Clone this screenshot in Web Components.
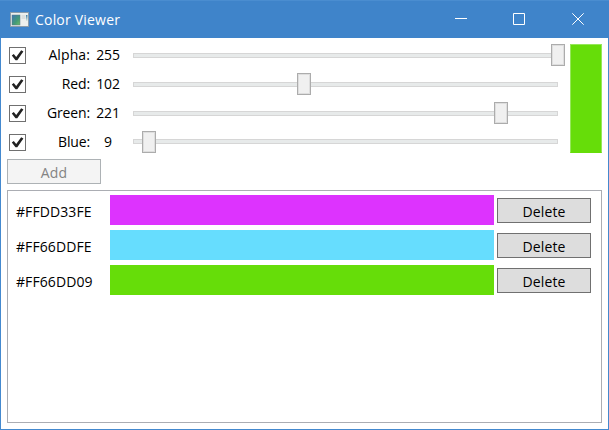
<!DOCTYPE html>
<html lang="en">
<head>
<meta charset="utf-8">
<title>Color Viewer</title>
<style>
html, body { margin: 0; height: 100%; }
body { font-family: "Open Sans", "Noto Sans", sans-serif; font-size: 14px; line-height: 20px; color: #000; overflow: hidden; }
</style>
</head>
<body>
<viewer-window>
  <title-bar slot="title">Color Viewer</title-bar>
  <channel-row label="Alpha:" value="255" pos="418" spacing="0.1px"></channel-row>
  <channel-row label="Red:" value="102" pos="164"></channel-row>
  <channel-row label="Green:" value="221" pos="361"></channel-row>
  <channel-row label="Blue:" value="9" pos="9" lift="1px"></channel-row>
  <push-button slot="add" disabled>Add</push-button>
  <color-item slot="list" color="#dd33fe">#FFDD33FE</color-item>
  <color-item slot="list" color="#66ddfe">#FF66DDFE</color-item>
  <color-item slot="list" color="#66dd09">#FF66DD09</color-item>
</viewer-window>
<script>
class Base extends HTMLElement {
  constructor() {
    super();
    this.attachShadow({ mode: 'open' }).innerHTML = this.markup();
  }
}

customElements.define('title-bar', class extends Base {
  markup() {
    return `<style>
      :host { display: flex; align-items: center; height: 38px; box-sizing: border-box; padding-left: 10px; background: #3f84ca; border-top: 1px solid #4a8dd0; color: #fff; }
      .icon { width: 19px; height: 15px; margin-right: 6px; }
      .text { flex: 1; letter-spacing: 0.2px; padding-top: 1px; }
      .controls { display: grid; grid-template-columns: 58px 59px 13px; margin-right: 24px; }
      .controls svg { width: 13px; height: 13px; fill: none; stroke: #fff; }
    </style>
    <svg class="icon" viewBox="0 0 19 15">
      <defs><linearGradient id="g" x2="1" y2="1"><stop offset="0" stop-color="#3f75b5"/><stop offset=".6" stop-color="#439b76"/><stop offset="1" stop-color="#70bd65"/></linearGradient>
      <linearGradient id="h" x2="0" y2="1"><stop offset="0" stop-color="#397ea7"/><stop offset="1" stop-color="#dfe8df"/></linearGradient></defs>
      <rect x=".5" y=".5" width="18" height="14" fill="#eef0ee" stroke="#8b9caa"/>
      <rect x="2" y="3" width="8" height="10" fill="url(#g)" stroke="#58798d" stroke-width=".5"/>
      <rect x="11.5" y="3" width="4" height="4" fill="#dce0df"/>
      <rect x="16" y="3" width="1.5" height="6" fill="url(#h)"/>
    </svg>
    <span class="text"><slot></slot></span>
    <span class="controls">
      <svg viewBox="0 0 13 13"><path d="M0 5.5H12"/></svg>
      <svg viewBox="0 0 13 13"><path d="M.5 .5H11.5V11.5H.5V.5Z"/></svg>
      <svg viewBox="0 0 13 13"><path d="M.3 .3L11.7 11.7M11.7 .3L.3 11.7"/></svg>
    </span>`;
  }
});

customElements.define('check-box', class extends Base {
  markup() {
    return `<style>
      :host { display: block; width: 17px; height: 17px; box-sizing: border-box; border: 1px solid #707070; background: #fff; }
      svg { display: block; width: 15px; height: 15px; }
    </style>
    <svg viewBox="0 0 15 15"><path d="M1.8 7.6L3.8 6.1L6.2 9L11.2 2.3L13.4 3.5L7.3 12.2H5.5Z" fill="#212121"/></svg>`;
  }
});

customElements.define('value-slider', class extends Base {
  markup() {
    return `<style>
      :host { display: flex; align-items: flex-start; height: 22px; width: 431px; }
      .track { width: 425px; height: 5px; box-sizing: border-box; border: 1px solid #d6d6d6; background: #e7eaea; margin-top: calc(9px - var(--lift)); display: flex; align-items: flex-start; }
      .thumb { flex: none; width: 14px; height: 22px; box-sizing: border-box; border: 1px solid #acacac; box-shadow: inset 0 0 0 1px #dedede; background: #f0f0f0; margin: calc(var(--lift) - 10px) 0 0 calc(var(--pos) - 1px); }
    </style><div class="track"><div class="thumb"></div></div>`;
  }
});

customElements.define('channel-row', class extends Base {
  markup() {
    const lift = this.getAttribute('lift') || '0px';
    return `<style>
      :host { display: grid; grid-template-columns: 17px 64px 36px 431px; align-items: start; height: 29px; padding-left: 2px; }
      check-box { margin-top: 6px; }
      span { margin-top: 4px; }
      .label { text-align: right; letter-spacing: ${this.getAttribute('spacing') || '-0.15px'}; }
      .value { text-align: center; letter-spacing: -0.15px; }
      value-slider { margin: 3px 0 0 7px; --lift: ${lift}; }
    </style>
    <check-box></check-box>
    <span class="label">${this.getAttribute('label')}</span>
    <span class="value">${this.getAttribute('value')}</span>
    <value-slider style="--pos:${this.getAttribute('pos')}px"></value-slider>`;
  }
});

customElements.define('push-button', class extends Base {
  markup() {
    return `<style>
      :host { display: flex; align-items: center; justify-content: center; width: 94px; height: 25px; box-sizing: border-box; padding-top: 3px; border: 1px solid #707070; background: #ddd; }
      :host([disabled]) { background: #f4f4f4; border-color: #adb2b5; color: #838383; letter-spacing: 0.2px; }
    </style><slot></slot>`;
  }
});

customElements.define('color-item', class extends Base {
  markup() {
    return `<style>
      :host { display: grid; grid-template-columns: 94px 384px 94px; align-items: center; height: 30px; margin-bottom: 5px; }
      .code { padding-top: 4px; letter-spacing: 0.08px; }
      .fill { height: 30px; background: ${this.getAttribute('color')}; }
      .text { letter-spacing: 0.15px; }
      push-button { margin: 1px 0 0 3px; }
    </style>
    <span class="code"><slot></slot></span>
    <div class="fill"></div>
    <push-button><span class="text">Delete</span></push-button>`;
  }
});

customElements.define('viewer-window', class extends Base {
  markup() {
    return `<style>
      :host { display: flex; flex-direction: column; width: 609px; height: 430px; box-sizing: border-box; background: #fff; }
      .client { flex: 1; display: flex; flex-direction: column; border: 1px solid #4489cf; border-top: 0; padding: 3px 6px 6px; }
      .top { display: flex; height: 118px; }
      .channels { width: 563px; }
      .preview { width: 32px; height: 109px; margin-top: 3px; box-sizing: border-box; background: #66dd09; border: 1px solid #96e75a; border-bottom-color: #66dd09; }
      .list { flex: 1; margin-top: 6px; border: 1px solid #abadb3; padding: 4px 0 0 8px; }
    </style>
    <slot name="title"></slot>
    <div class="client">
      <div class="top"><div class="channels"><slot></slot></div><div class="preview"></div></div>
      <slot name="add"></slot>
      <div class="list"><slot name="list"></slot></div>
    </div>`;
  }
});
</script>
</body>
</html>
